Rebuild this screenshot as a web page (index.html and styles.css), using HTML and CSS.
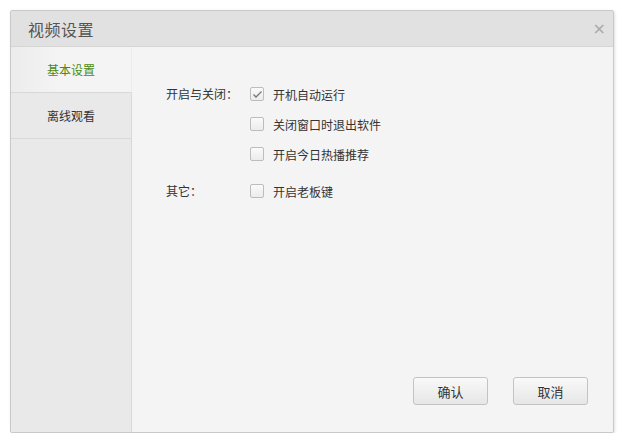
FILE: index.html
```html
<!DOCTYPE html>
<html lang="zh">
<head>
<meta charset="utf-8">
<link rel="stylesheet" href="styles.css">
</head>
<body>
<div class="dialog">
  <div class="titlebar">
    <span class="title">视频设置</span>
    <span class="close">×</span>
  </div>
  <div class="main">
    <div class="sidebar">
      <div class="tab active">基本设置</div>
      <div class="tab">离线观看</div>
      <div class="rest"></div>
    </div>
    <div class="content">
      <div class="form">
        <div class="group">
          <div class="label">开启与关闭：</div>
          <div class="options">
            <label class="opt"><span class="cb checked"><svg width="11" height="9" viewBox="0 0 11 9"><path d="M1.5 4.5 L4 7 L9.5 1.5" fill="none" stroke="#777" stroke-width="1.3"/></svg></span>开机自动运行</label>
            <label class="opt"><span class="cb"></span>关闭窗口时退出软件</label>
            <label class="opt"><span class="cb"></span>开启今日热播推荐</label>
          </div>
        </div>
        <div class="group other">
          <div class="label">其它：</div>
          <div class="options">
            <label class="opt"><span class="cb"></span>开启老板键</label>
          </div>
        </div>
      </div>
      <div class="buttons">
        <button class="btn">确认</button>
        <button class="btn">取消</button>
      </div>
    </div>
  </div>
</div>
</body>
</html>
```

FILE: styles.css
```css
html, body {
  margin: 0;
  padding: 0;
  background: #ffffff;
}
body {
  font-family: "Noto Sans CJK SC", "Liberation Sans", sans-serif;
  font-size: 12px;
  color: #333;
}
.dialog {
  margin: 10px 0 0 10px;
  width: 604px;
  height: 423px;
  border: 1px solid #c9c9c9;
  border-radius: 2px;
  box-shadow: 1px 1px 3px rgba(0,0,0,0.12);
  display: flex;
  flex-direction: column;
  background: #f4f4f4;
  box-sizing: border-box;
}
.titlebar {
  height: 36px;
  background: #e1e1e1;
  border-bottom: 1px solid #d6d6d6;
  display: flex;
  align-items: center;
  justify-content: space-between;
  padding: 0 7px 0 17px;
  flex-shrink: 0;
  box-sizing: border-box;
}
.title {
  font-size: 16px;
  color: #555;
  letter-spacing: 0.5px;
}
.close {
  font-family: "DejaVu Sans", sans-serif;
  font-size: 16px;
  color: #a8a8a8;
  margin-top: 0;
}
.main {
  flex: 1;
  display: flex;
}
.sidebar {
  width: 121px;
  display: flex;
  flex-direction: column;
  flex-shrink: 0;
}
.tab {
  height: 46px;
  display: flex;
  align-items: center;
  justify-content: center;
  background: #e9e9e9;
  border-right: 1px solid #d8d8d8;
  border-bottom: 1px solid #d8d8d8;
  box-sizing: border-box;
  color: #333;
}
.tab.active {
  height: 46px;
  background: linear-gradient(to right, #ececec, #f4f4f4 40%);
  border-right: 1px solid transparent;
  border-bottom: 1px solid #d8d8d8;
  color: #4a8a12;
}
.rest {
  flex: 1;
  background: #e9e9e9;
  border-right: 1px solid #d8d8d8;
}
.content {
  flex: 1;
  display: flex;
  flex-direction: column;
  padding: 33px 25px 27px 34px;
}
.form {
  flex: 1;
}
.group {
  display: flex;
}
.group.other {
  margin-top: 8px;
}
.label {
  width: 84px;
  line-height: 30px;
  height: 30px;
  margin-top: -1px;
}
.options {
  display: flex;
  flex-direction: column;
  margin-top: -1px;
}
.opt {
  height: 30px;
  display: flex;
  align-items: center;
}
.cb {
  width: 12px;
  height: 12px;
  border: 1px solid #bdbdbd;
  border-radius: 2px;
  background: linear-gradient(#fafafa, #ececec);
  margin-right: 9px;
  display: flex;
  align-items: center;
  justify-content: center;
  box-sizing: content-box;
}
.buttons {
  display: flex;
  justify-content: flex-end;
  gap: 25px;
}
.btn {
  width: 75px;
  height: 28px;
  border: 1px solid #c3c3c3;
  border-radius: 3px;
  background: linear-gradient(#f9f9f9, #e6e6e6);
  font-family: "Noto Sans CJK SC", sans-serif;
  font-size: 13px;
  color: #333;
  padding: 0;
}
```
